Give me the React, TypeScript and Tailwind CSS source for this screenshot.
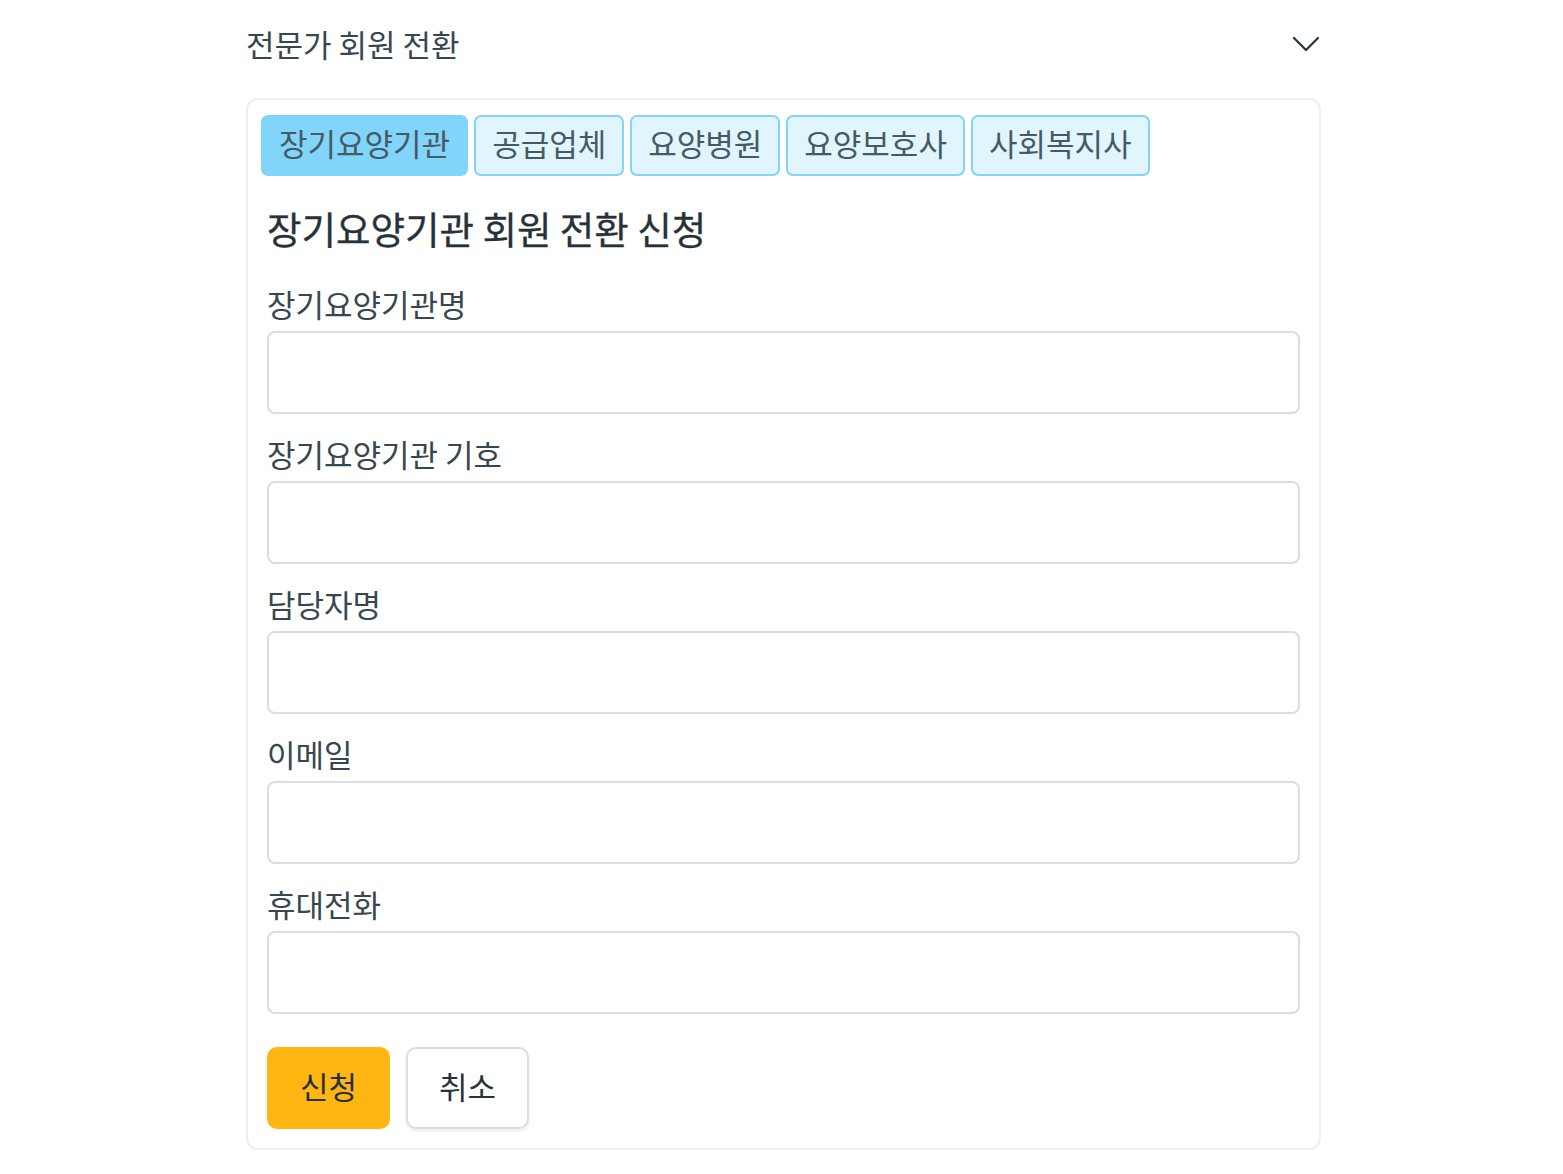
const tabs = ["장기요양기관", "공급업체", "요양병원", "요양보호사", "사회복지사"];

const fields = ["장기요양기관명", "장기요양기관 기호", "담당자명", "이메일", "휴대전화"];

function ChevronDown() {
  return (
    <svg width="28" height="18" viewBox="0 0 28 18" fill="none" className="text-[#263238]">
      <path d="M2 3 L14 15 L26 3" stroke="currentColor" strokeWidth="2.2" strokeLinecap="round" strokeLinejoin="round" />
    </svg>
  );
}

export default function App() {
  return (
    <div className="min-h-screen bg-white font-['Noto_Sans_CJK_KR',sans-serif]">
      <div className="ml-[246px] w-[1075px]">
        {/* Header */}
        <div className="flex h-[88px] items-center justify-between">
          <span className="pb-[2px] text-[31px] leading-none text-[#37474f]">전문가 회원 전환</span>
          <div className="mr-[1px]">
            <ChevronDown />
          </div>
        </div>

        {/* Card */}
        <div className="mt-[10px] rounded-[12px] border-2 border-[#efefef] pb-[19px] pt-[15px]">
          <div className="flex gap-[6px] px-[13px]">
            {tabs.map((tab, i) => (
              <button
                key={tab}
                className={
                  i === 0
                    ? "flex h-[61px] items-center rounded-[7px] border-2 border-[#81d4fa] bg-[#81d4fa] px-[16px] pb-[4px] text-[31px] text-[#455a64]"
                    : "flex h-[61px] items-center rounded-[7px] border-2 border-[#81d4fa] bg-[#e1f5fe] px-[16px] pb-[4px] text-[31px] text-[#455a64]"
                }
              >
                {tab}
              </button>
            ))}
          </div>

          <div className="px-[19px]">
            <h2 className="mt-[27px] text-[37.5px] font-normal leading-[50px] text-[#263238] [-webkit-text-stroke:0.3px_#263238]">
              장기요양기관 회원 전환 신청
            </h2>

            <div className="mt-[31px] flex flex-col gap-[20px]">
              {fields.map((f) => (
                <div key={f} className="flex flex-col">
                  <label className="text-[31px] leading-[40px] text-[#37474f]">{f}</label>
                  <input
                    type="text"
                    className="mt-[7px] h-[83px] w-full rounded-[8px] border-2 border-[#dcdde4] bg-white px-4 text-[28px] outline-none"
                  />
                </div>
              ))}
            </div>

            <div className="mt-[33px] flex gap-[16px]">
              <button className="h-[82px] w-[123px] rounded-[10px] bg-[#ffb612] pb-[3px] text-[31px] text-[#263238]">
                신청
              </button>
              <button className="h-[82px] w-[123px] rounded-[10px] border-2 border-[#dcdde4] bg-white pb-[3px] text-[31px] text-[#263238] shadow-[0_2px_4px_rgba(0,0,0,0.08)]">
                취소
              </button>
            </div>
          </div>
        </div>
      </div>
    </div>
  );
}
